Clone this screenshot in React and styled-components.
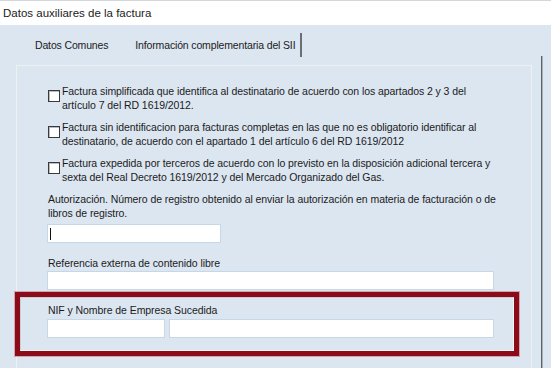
import React from 'react';
import styled, { createGlobalStyle } from 'styled-components';

const GlobalStyle = createGlobalStyle`
    * {
        box-sizing: border-box;
    }

    body {
        margin: 0;
        background: #dce6f1;
        font-family: "Liberation Sans", Arial, sans-serif;
        color: #1b1b1b;
        overflow: hidden;
    }
`;

const Window = styled.div`
    width: 551px;
    height: 368px;
    display: flex;
    flex-direction: column;
    overflow: hidden;
`;

const TitleBar = styled.div`
    height: 25px;
    flex: none;
    display: flex;
    align-items: center;
    padding: 0 0 1px 3px;
    background: #fff;
    border-top: 1px solid #d3d6da;
    font-size: 11.5px;
    color: #222;
`;

const Body = styled.div`
    flex: 1;
    display: flex;
    background-color: #dce6f1;
    background-image: radial-gradient(rgba(200, 212, 228, 0.55) 0.6px, transparent 0.7px);
    background-size: 4px 4px;
`;

const Main = styled.div`
    margin-left: 16px;
    width: 516px;
    display: flex;
    flex-direction: column;
`;

const Rule = styled.div`
    margin: 31px 0 0 9px;
    width: 2px;
    background: linear-gradient(to right, #5e6369 50%, #a9aeb4 50%);
`;

// Tabs
const TabStrip = styled.div`
    height: 40px;
    flex: none;
    display: flex;
    align-items: center;
    padding-left: 19px;
    gap: 27px;
`;

const Tab = styled.div`
    font-size: 10.5px;
    letter-spacing: -0.15px;
    display: flex;
    align-items: center;
    height: 24px;
    ${props => (props.divider ? 'padding-right: 5px; border-right: 2px solid #6a6f75;' : '')}
`;

const Panel = styled.div`
    flex: 1;
    border: 1px solid #eef1f4;
    border-bottom: none;
    padding: 18px 0 0 30px;
    font-size: 10.5px;
    letter-spacing: -0.07px;
`;

const Line = styled.span`
    display: block;
    line-height: 14px;
    white-space: nowrap;
`;

// Checkboxes
const CheckRow = styled.div`
    display: flex;
    align-items: flex-start;
    margin-bottom: 8px;
`;

const Box = styled.span`
    width: 12px;
    height: 12px;
    flex: none;
    margin: 6px 2px 0 1px;
    background: #fff;
    border: 1px solid #3a3a3a;
    box-shadow: inset 1px 1px 0 #b8bcc0;
`;

const Check = ({ lines }) => (
    <CheckRow>
        <Box />
        <div>
            {lines.map((l, i) => (
                <Line key={i}>{l}</Line>
            ))}
        </div>
    </CheckRow>
);

// Fields
const Label = styled.div`
    padding-left: 1px;
    margin-top: ${props => props.top || 0}px;
`;

const Field = styled.div`
    width: ${props => props.width}px;
    height: 19px;
    margin-top: ${props => props.top || 0}px;
    background: #fff;
    border: 1px solid #c6d8e8;
    position: relative;
`;

const Caret = styled.span`
    position: absolute;
    left: 2px;
    top: 3px;
    width: 1px;
    height: 12px;
    background: #111;
`;

const FieldRow = styled.div`
    display: flex;
    gap: 4px;
    margin-top: 2px;
`;

// Highlighted group
const Highlight = styled.section`
    width: 504px;
    margin: 2px 0 0 -32px;
    border: 5px solid #8c0b18;
    box-shadow: 0 0 0 1px rgba(190, 40, 50, 0.35);
`;

const Group = styled.div`
    border: 1px solid #c9cfd6;
    border-right-color: #f2f4f6;
    border-bottom-color: #f2f4f6;
    padding: 5px 0 12px 26px;
`;

function App() {
    return (
        <>
            <GlobalStyle />
            <Window>
                <TitleBar>Datos auxiliares de la factura</TitleBar>
                <Body>
                    <Main>
                        <TabStrip>
                            <Tab>Datos Comunes</Tab>
                            <Tab divider>Información complementaria del SII</Tab>
                        </TabStrip>
                        <Panel>
                            <Check
                                lines={[
                                    'Factura simplificada que identifica al destinatario de acuerdo con los apartados 2 y 3 del',
                                    'artículo 7 del RD 1619/2012.',
                                ]}
                            />
                            <Check
                                lines={[
                                    'Factura sin identificacion para facturas completas en las que no es obligatorio identificar al',
                                    'destinatario, de acuerdo con el apartado 1 del artículo 6 del RD 1619/2012',
                                ]}
                            />
                            <Check
                                lines={[
                                    'Factura expedida por terceros de acuerdo con lo previsto en la disposición adicional tercera y',
                                    'sexta del Real Decreto 1619/2012 y del Mercado Organizado del Gas.',
                                ]}
                            />

                            <Label>
                                <Line>
                                    Autorización. Número de registro obtenido al enviar la autorización en materia de facturación o de
                                </Line>
                                <Line>libros de registro.</Line>
                            </Label>
                            <Field width={174} top={4}>
                                <Caret />
                            </Field>

                            <Label top={13}>
                                <Line>Referencia externa de contenido libre</Line>
                            </Label>
                            <Field width={447} top={1} />

                            <Highlight>
                                <Group>
                                    <Label>
                                        <Line>NIF y Nombre de Empresa Sucedida</Line>
                                    </Label>
                                    <FieldRow>
                                        <Field width={118} />
                                        <Field width={325} />
                                    </FieldRow>
                                </Group>
                            </Highlight>
                        </Panel>
                    </Main>
                    <Rule />
                </Body>
            </Window>
        </>
    );
}

export default App;
